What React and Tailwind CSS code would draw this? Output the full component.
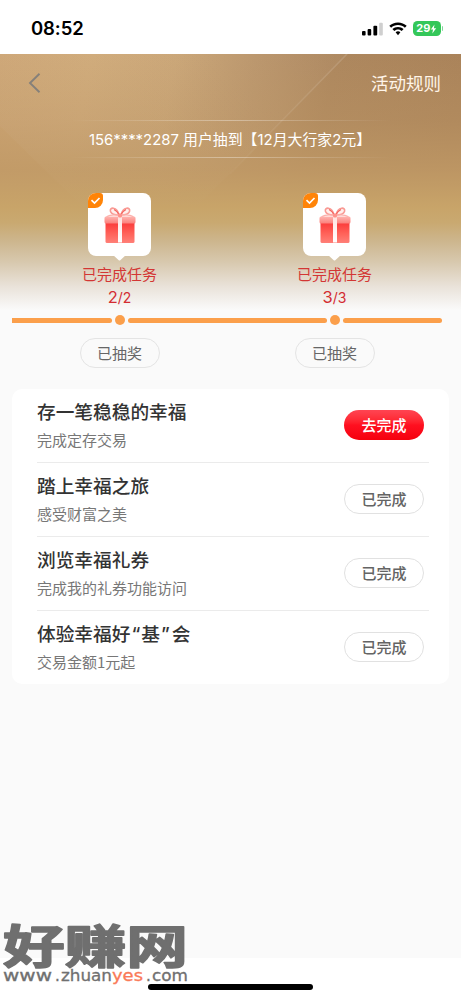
const rewards = [
  { done: 2, total: 2 },
  { done: 3, total: 3 },
];

const tasks = [
  { title: "存一笔稳稳的幸福", desc: "完成定存交易", done: false },
  { title: "踏上幸福之旅", desc: "感受财富之美", done: true },
  { title: "浏览幸福礼券", desc: "完成我的礼券功能访问", done: true },
  {
    title: (
      <>
        体验幸福好<span className="pl-[1px]">“</span>
        <span className="px-[1px]">基</span>
        <span className="pr-[2px]">”</span>会
      </>
    ),
    desc: "交易金额1元起",
    done: true,
  },
];

function StatusBar() {
  return (
    <header className="flex h-[54px] items-center justify-between bg-white pt-[3px] pr-[18px] pl-[31px]">
      <span className="font-[Inter] text-[18.5px] leading-none font-semibold tracking-[-0.1px] text-black">08:52</span>
      <div className="flex items-center">
        <svg width="21" height="14" viewBox="0 0 21 14">
          <rect x="0" y="9" width="3.6" height="4.5" rx="1" />
          <rect x="5.6" y="7" width="3.6" height="6.5" rx="1" />
          <rect x="11.4" y="3.8" width="3.8" height="9.7" rx="1" />
          <rect x="17.2" y="0.8" width="3.6" height="12.7" rx="1" fill="#cfcfcf" />
        </svg>
        <svg className="ml-[6px]" width="18" height="14" viewBox="0 0 18 14">
          <path d="M9 0.4C5.6 0.4 2.5 1.7 0.3 3.8L2.1 5.7C3.9 4 6.3 3 9 3s5.1 1 6.9 2.7l1.8-1.9C15.5 1.7 12.4.4 9 .4Z" />
          <path d="M9 4.9c-2.2 0-4.1.8-5.6 2.2l1.9 1.9C6.3 8.1 7.5 7.5 9 7.5s2.7.6 3.7 1.5l1.9-1.9C13.1 5.7 11.2 4.9 9 4.9Z" />
          <path d="M9 9.3c-.9 0-1.7.3-2.4.9L9 13.2l2.4-3C10.7 9.6 9.9 9.3 9 9.3Z" />
        </svg>
        <div className="ml-[6px] flex h-[15px] w-[27.5px] items-center justify-center rounded-[4.5px] bg-[#34c759]">
          <span className="font-[Inter] text-[11px] leading-none font-bold text-white">29</span>
          <svg width="7" height="10" viewBox="0 0 7 10" fill="#fff">
            <path d="M4.5 0.5 0.8 5.5h2.2L2.3 9.5 6.2 4.3H3.9Z" />
          </svg>
        </div>
        <span className="ml-px h-[5px] w-[1.5px] rounded-r bg-[#7fd796]" />
      </div>
    </header>
  );
}

function HeroBackdrop() {
  return (
    <svg className="absolute inset-0 h-full w-full" viewBox="0 0 461 264" preserveAspectRatio="none">
      <defs>
        <linearGradient id="gold" x1="0" y1="0" x2="1" y2="0.12">
          <stop offset="0" stopColor="#cda575" />
          <stop offset="0.2" stopColor="#cfa978" />
          <stop offset="0.38" stopColor="#c9a475" />
          <stop offset="0.55" stopColor="#b9946a" />
          <stop offset="0.72" stopColor="#ad875e" />
          <stop offset="1" stopColor="#aa835a" />
        </linearGradient>
        <linearGradient id="tone" x1="0" y1="0" x2="0" y2="1">
          <stop offset="0" stopColor="#c09966" stopOpacity="0" />
          <stop offset="0.25" stopColor="#be9764" stopOpacity="0.35" />
          <stop offset="0.44" stopColor="#c09965" stopOpacity="0.85" />
          <stop offset="0.58" stopColor="#c8a469" />
          <stop offset="0.64" stopColor="#c9a971" />
          <stop offset="0.71" stopColor="#cdb68e" />
          <stop offset="0.79" stopColor="#d8c9af" />
          <stop offset="0.88" stopColor="#e9e2d9" />
          <stop offset="0.97" stopColor="#fafafa" />
          <stop offset="1" stopColor="#fafafa" />
        </linearGradient>
        <linearGradient id="beam" x1="0" y1="0" x2="0" y2="1">
          <stop offset="0" stopColor="#fff" stopOpacity="0.03" />
          <stop offset="0.6" stopColor="#fff" stopOpacity="0.025" />
          <stop offset="1" stopColor="#fff" stopOpacity="0" />
        </linearGradient>
        <linearGradient id="edge" x1="0" y1="0" x2="0" y2="1">
          <stop offset="0" stopColor="#fff" stopOpacity="0.12" />
          <stop offset="1" stopColor="#fff" stopOpacity="0.02" />
        </linearGradient>
      </defs>
      <rect width="461" height="264" fill="url(#gold)" />
      <rect width="461" height="264" fill="url(#tone)" />
      <path d="M0 0H348L190 160H90L0 72Z" fill="url(#beam)" />
      <path d="M347 0 230 120" stroke="url(#edge)" strokeWidth="1.5" />
    </svg>
  );
}

function Gift() {
  return (
    <svg width="32" height="37" viewBox="0 0 32 37">
      <defs>
        <linearGradient id="box" x1="0" y1="0" x2="0" y2="1">
          <stop offset="0" stopColor="#fb3838" />
          <stop offset="0.55" stopColor="#ff6259" />
          <stop offset="1" stopColor="#ff8078" />
        </linearGradient>
        <linearGradient id="lid" x1="0" y1="0" x2="0" y2="1">
          <stop offset="0" stopColor="#ffb5b0" />
          <stop offset="1" stopColor="#fb807b" />
        </linearGradient>
        <linearGradient id="ribbon" x1="0" y1="0" x2="0" y2="1">
          <stop offset="0" stopColor="#ffe3e0" />
          <stop offset="1" stopColor="#fff" />
        </linearGradient>
      </defs>
      <path d="M15 8C13-1 5 0 6.5 4.5 7.5 7.5 12 8 15 8ZM17 8C19-1 27 0 25.5 4.5 24.5 7.5 20 8 17 8Z" fill="#fff0ed" stroke="#f99a94" strokeWidth="1.6" />
      <path d="M10 2.5c2 1 4 3 5 5M22 2.5c-2 1-4 3-5 5" stroke="#f4645e" strokeWidth="1.2" fill="none" />
      <path d="M15 8C10 7.5 5 8 2.5 10M17 8c5-.5 10 0 12.5 2" stroke="#fbb1ac" strokeWidth="1.3" fill="none" />
      <rect x="1.5" y="15" width="29" height="21" rx="1.5" fill="url(#box)" />
      <rect x="0.5" y="9.5" width="31" height="7" rx="1.5" fill="url(#lid)" />
      <rect x="14" y="9.5" width="4" height="26" fill="url(#ribbon)" />
      <rect x="14" y="6.5" width="4" height="4" rx="1.5" fill="#ff918a" />
    </svg>
  );
}

function Reward({ done, total }) {
  return (
    <div className="flex w-[215px] flex-col items-center">
      <div className="relative flex h-[63px] w-[63px] items-center justify-center rounded-[8px] bg-white pt-[2px]">
        <Gift />
        <span className="absolute top-0 left-0 flex h-[15px] w-[15px] items-center justify-center rounded-tl-[8px] rounded-tr-[3px] rounded-br-[8px] bg-[#ff8408]">
          <svg width="11" height="9" viewBox="0 0 11 9" fill="none" stroke="#fff" strokeWidth="1.7">
            <path d="m1.5 4.2 3 2.8 5-5" />
          </svg>
        </span>
        <svg className="absolute -bottom-[5px] left-[25px]" width="13" height="6" viewBox="0 0 13 6">
          <path d="M0 0h13L7.5 5q-1 1-2 0Z" fill="#fff" />
        </svg>
      </div>
      <span className="mt-[7px] text-[15px] leading-[22px] text-[#d33634]">已完成任务</span>
      <span className="font-[Inter] text-[14px] leading-[24px] text-[#d32c32]">
        <span className="text-[16.5px]">{done}</span>/{total}
      </span>
    </div>
  );
}

function Progress() {
  return (
    <div className="relative mx-3 flex h-[10px] w-[431px] items-center">
      <span className="h-[5px] w-[100px] rounded-r-full bg-[#fb9f4b]" />
      <span className="ml-[3px] h-[10px] w-[10px] rounded-full bg-[#fb9f4b]" />
      <span className="ml-[3px] h-[5px] w-[199px] rounded-full bg-[#fb9f4b]" />
      <span className="ml-[3px] h-[10px] w-[10px] rounded-full bg-[#fb9f4b]" />
      <span className="ml-[3px] h-[5px] w-[99px] rounded-full bg-[#fb9f4b]" />
    </div>
  );
}

function Task({ title, desc, done }) {
  return (
    <li className="flex h-[74px] items-center justify-between border-b border-[#ebebeb] pr-[5px] last:h-[73px] last:border-b-0">
      <div className="pt-px">
        <h2 className="font-[Inter,'Noto_Sans_CJK_SC'] text-[18.7px] leading-[28px] font-medium whitespace-nowrap text-[#333]">{title}</h2>
        <p className="mt-px mb-[2px] text-[15px] leading-[24px] text-[#777]">{desc}</p>
      </div>
      {done ? (
        <button className="mb-[2px] h-[30px] w-[80px] rounded-full border-[1.5px] border-[#e1e1e1] text-[15px] leading-none font-medium text-[#646464]">已完成</button>
      ) : (
        <button className="mb-[2px] h-[30px] w-[80px] rounded-full bg-linear-to-b from-[#ff4452] via-[#ff1020] to-[#f5000c] text-[15px] leading-none font-medium text-white">
          去完成
        </button>
      )}
    </li>
  );
}

function Watermark() {
  return (
    <div className="absolute top-[900px] left-[3px] h-[98px] w-[190px]">
      <svg width="190" height="98" viewBox="0 0 190 98">
        <text x="0" y="63" textLength="185" lengthAdjust="spacingAndGlyphs" fontSize="46" fontWeight="700" fill="#6f6f6f" stroke="#6f6f6f" strokeWidth="1.6" strokeLinejoin="round">
          好赚网
        </text>
        <g fontSize="15" fontFamily="DejaVu Sans" fill="#707070" stroke="#707070" strokeWidth="0.3">
          <text x="0" y="81" textLength="49" lengthAdjust="spacingAndGlyphs">www</text>
          <text x="52" y="81">.</text>
          <text x="58" y="81" textLength="51" lengthAdjust="spacingAndGlyphs">zhuan</text>
          <text x="109" y="81" textLength="31" lengthAdjust="spacingAndGlyphs" fill="#fa7a58" stroke="#fa7a58">yes</text>
          <text x="143" y="81">.</text>
          <text x="149" y="81" textLength="36" lengthAdjust="spacingAndGlyphs">com</text>
        </g>
      </svg>
    </div>
  );
}

export default function App() {
  return (
    <div className="relative flex h-[1000px] w-[461px] flex-col overflow-hidden bg-[#fafafa] font-['Noto_Sans_CJK_SC',sans-serif]">
      <StatusBar />
      <section className="relative h-[264px] shrink-0">
        <HeroBackdrop />
        <div className="relative">
          <nav className="flex h-[58px] items-center justify-between pr-[20px] pl-[28px]">
            <svg width="14" height="20" viewBox="0 0 14 20" fill="none" stroke="#85807a" strokeWidth="1.9">
              <path d="M11.5 0.8 2 10l9.5 9.2" />
            </svg>
            <span className="pb-px text-[17.5px] leading-none text-[#fff5e9]">活动规则</span>
          </nav>
          <div className="mx-[70px] mt-[8px] flex h-[38px] flex-col justify-between">
            <span className="h-px bg-linear-to-r from-transparent via-white/35 to-transparent" />
            <p className="-ml-px pt-px text-center font-[Inter,'Noto_Sans_CJK_SC'] text-[14.9px] leading-[24px] whitespace-nowrap text-white">
              156****2287 用户抽到【12月大行家2元】
            </p>
            <span className="h-px bg-linear-to-r from-transparent via-white/35 to-transparent" />
          </div>
          <div className="mt-[35px] ml-[12px] flex">
            {rewards.map((r) => (
              <Reward key={r.total} done={r.done} total={r.total} />
            ))}
          </div>
        </div>
      </section>
      <div className="-mt-[3px]">
        <Progress />
      </div>
      <div className="mt-[13px] ml-[12px] flex">
        {rewards.map((r) => (
          <div key={r.total} className="flex w-[215px] justify-center">
            <button className="h-[30px] w-[80px] rounded-full border-[1.5px] border-[#e4e4e4] pb-px text-[15px] leading-none text-[#666]">已抽奖</button>
          </div>
        ))}
      </div>
      <ul className="mx-[12px] mt-[21px] rounded-[10px] bg-white pr-[20px] pl-[25px]">
        {tasks.map((t) => (
          <Task key={t.desc} {...t} />
        ))}
      </ul>
      <footer className="mt-auto flex h-[42px] shrink-0 justify-center bg-white pt-[26px]">
        <span className="h-[6px] w-[165px] rounded-full bg-black" />
      </footer>
      <Watermark />
    </div>
  );
}
